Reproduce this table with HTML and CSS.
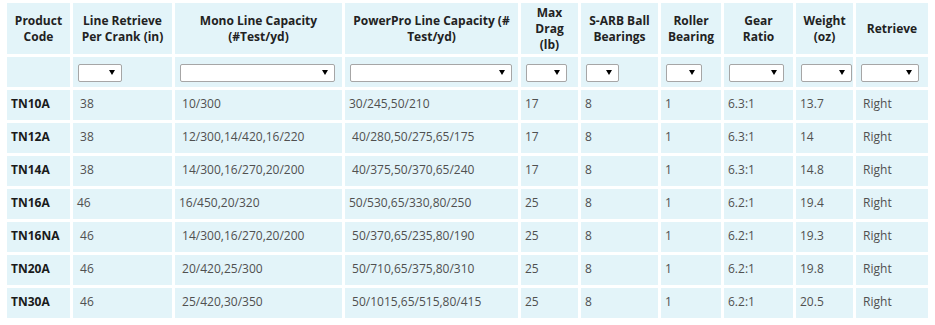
FILE: index.html
```html
<!DOCTYPE html>
<html lang="en">
<head>
<meta charset="utf-8">
<title>Reel Specifications</title>
<link rel="stylesheet" href="styles.css">
</head>
<body>
<table class="specs">
  <thead>
    <tr class="head">
      <th class="c1">Product Code</th>
      <th class="c2">Line Retrieve Per Crank (in)</th>
      <th class="c3">Mono Line Capacity (#Test/yd)</th>
      <th class="c4">PowerPro Line Capacity (# Test/yd)</th>
      <th class="c5">Max Drag (lb)</th>
      <th class="c6">S-ARB Ball Bearings</th>
      <th class="c7">Roller Bearing</th>
      <th class="c8">Gear Ratio</th>
      <th class="c9">Weight (oz)</th>
      <th class="c10">Retrieve</th>
    </tr>
    <tr class="filters">
      <td></td>
      <td><span class="dd w2"><select aria-label="Line Retrieve"></select></span></td>
      <td><span class="dd w3"><select aria-label="Mono Line Capacity"></select></span></td>
      <td><span class="dd w4"><select aria-label="PowerPro Line Capacity"></select></span></td>
      <td><span class="dd w5"><select aria-label="Max Drag"></select></span></td>
      <td><span class="dd w6"><select aria-label="S-ARB Ball Bearings"></select></span></td>
      <td><span class="dd w7"><select aria-label="Roller Bearing"></select></span></td>
      <td><span class="dd w8"><select aria-label="Gear Ratio"></select></span></td>
      <td><span class="dd w9"><select aria-label="Weight"></select></span></td>
      <td><span class="dd w10"><select aria-label="Retrieve"></select></span></td>
    </tr>
  </thead>
  <tbody>
    <tr>
      <td class="code">TN10A</td><td>&nbsp;38</td><td>&nbsp;10/300</td><td>30/245,50/210</td><td>17</td><td>8</td><td>1</td><td>6.3:1</td><td>13.7</td><td>&nbsp;Right</td>
    </tr>
    <tr>
      <td class="code">TN12A</td><td>&nbsp;38</td><td>&nbsp;12/300,14/420,16/220</td><td>&nbsp;40/280,50/275,65/175</td><td>17</td><td>8</td><td>1</td><td>6.3:1</td><td>14</td><td>&nbsp;Right</td>
    </tr>
    <tr>
      <td class="code">TN14A</td><td>&nbsp;38</td><td>&nbsp;14/300,16/270,20/200</td><td>&nbsp;40/375,50/370,65/240</td><td>17</td><td>8</td><td>1</td><td>6.3:1</td><td>14.8</td><td>&nbsp;Right</td>
    </tr>
    <tr>
      <td class="code">TN16A</td><td>46</td><td>16/450,20/320</td><td>50/530,65/330,80/250</td><td>25</td><td>8</td><td>1</td><td>6.2:1</td><td>19.4</td><td>&nbsp;Right</td>
    </tr>
    <tr>
      <td class="code">TN16NA</td><td>&nbsp;46</td><td>&nbsp;14/300,16/270,20/200</td><td>&nbsp;50/370,65/235,80/190</td><td>25</td><td>8</td><td>1</td><td>6.2:1</td><td>19.3</td><td>&nbsp;Right</td>
    </tr>
    <tr>
      <td class="code">TN20A</td><td>&nbsp;46</td><td>&nbsp;20/420,25/300</td><td>&nbsp;50/710,65/375,80/310</td><td>25</td><td>8</td><td>1</td><td>6.2:1</td><td>19.8</td><td>&nbsp;Right</td>
    </tr>
    <tr>
      <td class="code">TN30A</td><td>&nbsp;46</td><td>&nbsp;25/420,30/350</td><td>&nbsp;50/1015,65/515,80/415</td><td>25</td><td>8</td><td>1</td><td>6.2:1</td><td>20.5</td><td>&nbsp;Right</td>
    </tr>
  </tbody>
</table>
</body>
</html>
```

FILE: styles.css
```css
html, body {
  margin: 0;
  padding: 0;
  background: #ffffff;
}

body {
  font-family: "Open Sans", "DejaVu Sans", sans-serif;
  font-size: 12px;
  color: #505050;
}

.specs {
  border-collapse: separate;
  border-spacing: 3px;
  table-layout: fixed;
  width: 927px;
  margin-left: 4px;
}

.specs th,
.specs td {
  box-sizing: border-box;
  background: #e3f4f9;
  text-align: left;
}

.head th {
  height: 51px;
  padding: 0 5px;
  text-align: center;
  vertical-align: middle;
  font-weight: 700;
  color: #222222;
  line-height: 16px;
}

.c1 { width: 63px; }
.c2 { width: 99px; }
.c3 { width: 167px; }
.c4 { width: 173px; }
.c5 { width: 57px; }
.c6 { width: 77px; }
.c7 { width: 60px; }
.c8 { width: 69px; }
.c9 { width: 57px; }
.c10 { width: 72px; }

.filters td {
  height: 30px;
  padding: 7px 5px 5px;
  vertical-align: top;
}

.dd {
  position: relative;
  display: block;
  height: 18px;
}

.dd::after {
  content: "";
  position: absolute;
  right: 7px;
  top: 6px;
  width: 0;
  height: 0;
  border-left: 3px solid transparent;
  border-right: 3px solid transparent;
  border-top: 5px solid #000000;
  pointer-events: none;
}

.dd select {
  appearance: none;
  -webkit-appearance: none;
  display: block;
  box-sizing: border-box;
  width: 100%;
  height: 18px;
  margin: 0;
  padding: 0;
  border: 1px solid #a6a6a6;
  border-radius: 2px;
  background: #ffffff;
}

.w2 { width: 44px; }
.w3 { width: 155px; }
.w4 { width: 162px; }
.w5 { width: 41px; }
.w6 { width: 33px; }
.w7 { width: 36px; }
.w8 { width: 55px; }
.w9 { width: 51px; }
.w10 { width: 58px; }

tbody td {
  height: 30px;
  padding: 3px 4px 6px;
  vertical-align: middle;
  line-height: 16px;
  white-space: nowrap;
}

tbody td.code {
  font-weight: 700;
  color: #1a1a1a;
}
```
